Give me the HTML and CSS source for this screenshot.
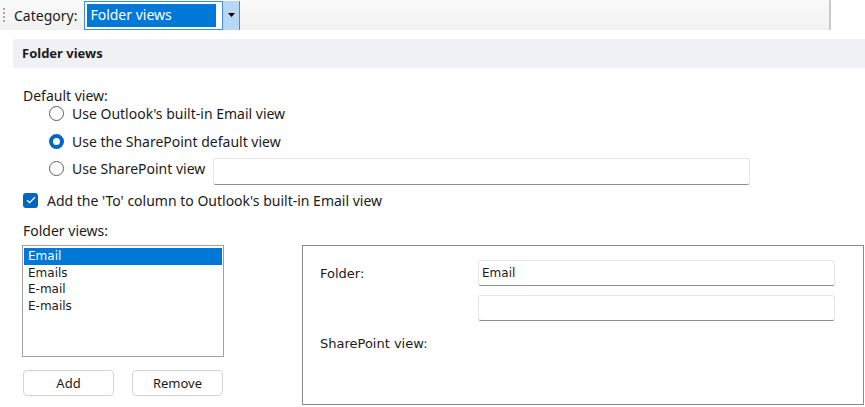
FILE: index.html
```html
<!DOCTYPE html>
<html>
<head>
<meta charset="utf-8">
<link rel="stylesheet" href="styles.css">
</head>
<body>
<div class="toolbar">
  <div class="grip"><span></span><span></span><span></span><span></span></div>
  <span class="cat-label">Category:</span>
  <div class="combo">
    <div class="combo-value">Folder views</div>
    <div class="combo-btn"><svg width="7" height="4" viewBox="0 0 7 4"><path d="M0 0h7L3.5 4z" fill="#000"/></svg></div>
  </div>
</div>
<div class="section-header">Folder views</div>
<div class="content">
  <div class="label dv">Default view:</div>
  <div class="radios">
    <div class="radio-row"><span class="radio"></span><span>Use Outlook's built-in Email view</span></div>
    <div class="radio-row"><span class="radio checked"></span><span>Use the SharePoint default view</span></div>
    <div class="radio-row"><span class="radio"></span><span class="rtext">Use SharePoint view</span><div class="textbox wide"></div></div>
  </div>
  <div class="check-row"><span class="check"><svg width="10" height="8" viewBox="0 0 10 8"><path d="M1 4.2l2.6 2.4L9 1.2" fill="none" stroke="#fff" stroke-width="1.3"/></svg></span><span>Add the 'To' column to Outlook's built-in Email view</span></div>
  <div class="label fv">Folder views:</div>
  <div class="bottom">
    <div class="left">
      <div class="listbox">
        <div class="item sel">Email</div>
        <div class="item">Emails</div>
        <div class="item">E-mail</div>
        <div class="item">E-mails</div>
      </div>
      <div class="buttons">
        <div class="btn">Add</div>
        <div class="btn">Remove</div>
      </div>
    </div>
    <div class="panel">
      <div class="prow"><span class="plabel">Folder:</span><div class="textbox field">Email</div></div>
      <div class="prow"><span class="plabel"></span><div class="textbox field"></div></div>
      <div class="prow sp"><span class="plabel">SharePoint view:</span></div>
    </div>
  </div>
</div>
</body>
</html>
```
FILE: styles.css
```css
* { box-sizing: border-box; }
body {
  margin: 0;
  background: #fff;
  font-family: "Noto Sans", "Open Sans", sans-serif;
  font-size: 14px;
  color: #1b1b1b;
  width: 865px;
  height: 407px;
  overflow: hidden;
}
.toolbar {
  width: 831px;
  height: 30px;
  display: flex;
  align-items: center;
  background: linear-gradient(#fafafa, #f1f1f1);
  border-right: 2px solid #c8c8c8;
}
.grip {
  width: 14px;
  display: flex;
  flex-direction: column;
  gap: 2px;
  padding-left: 3px;
}
.grip span { width: 2px; height: 2px; background: #a8a8a8; display: block; }
.cat-label { font-size: 14px; margin-right: 7px; }
.combo {
  width: 156px;
  height: 29px;
  border: 1px solid #3c8fe0;
  background: #fff;
  display: flex;
  padding: 2px 0 2px 2px;
}
.combo-value {
  width: 129px;
  background: #0078d7;
  color: #fff;
  font-size: 14px;
  line-height: 22px;
  padding-left: 3px;
}
.combo-btn {
  margin-left: auto;
  margin-top: -3px;
  margin-bottom: -3px;
  width: 17px;
  background: #b8d7f5;
  border-left: 1px solid #3c8fe0;
  display: flex;
  align-items: center;
  justify-content: center;
}
.section-header {
  margin: 9px 0 0 13px;
  height: 29px;
  background: #f0f1f5;
  font-weight: bold;
  font-size: 13px;
  line-height: 29px;
  padding-left: 9px;
}
.content { padding-left: 23px; }
.label { height: 18px; line-height: 18px; }
.dv { margin-top: 19px; }
.radios { padding-left: 26px; margin-top: -5px; }
.radio-row {
  height: 27.5px;
  display: flex;
  align-items: center;
}
.radio {
  width: 15px;
  height: 15px;
  border-radius: 50%;
  border: 1px solid #5f5f5f;
  background: #fff;
  margin-right: 8px;
  flex: none;
}
.radio.checked {
  border: 4.5px solid #0067c0;
  background: #fff;
}
.rtext { width: 141px; }
.textbox {
  background: #fff;
  border: 1px solid #e6e6e6;
  border-bottom: 1px solid #8d8d8d;
  border-radius: 3px;
}
.wide {
  width: 537px;
  height: 27px;
  margin-top: 6px;
}
.check-row {
  height: 26px;
  display: flex;
  align-items: center;
  margin-top: 4.5px;
}
.check {
  width: 15px;
  height: 15px;
  border-radius: 3px;
  background: #0067c0;
  display: flex;
  align-items: center;
  justify-content: center;
  margin-right: 9px;
}
.fv { margin-top: 9px; }
.bottom {
  display: flex;
  margin-top: 5px;
}
.left { width: 279px; }
.listbox {
  width: 202px;
  height: 112px;
  border: 1px solid #a0a0a0;
  margin-left: -1px;
  padding: 2px 1px;
  font-family: "DejaVu Sans", sans-serif;
  font-size: 12px;
}
.item {
  height: 16.5px;
  line-height: 16.5px;
  padding-left: 4px;
}
.item.sel { background: #0078d7; color: #fff; }
.buttons {
  display: flex;
  gap: 18px;
  margin-top: 13px;
}
.btn {
  width: 91px;
  height: 26px;
  border: 1px solid #d4d4d4;
  border-radius: 4px;
  background: #fff;
  text-align: center;
  line-height: 24px;
  font-size: 13px;
}
.panel {
  width: 562px;
  height: 160px;
  border: 1px solid #8a8a8a;
  padding: 14px 0 0 17px;
  font-family: "DejaVu Sans", sans-serif;
  font-size: 13px;
}
.prow {
  display: flex;
  align-items: center;
  margin-bottom: 9px;
}
.plabel { width: 158px; }
.field {
  width: 357px;
  height: 26px;
  line-height: 24px;
  padding-left: 3px;
  font-size: 12px;
}
.sp { margin-top: 15px; }
```
